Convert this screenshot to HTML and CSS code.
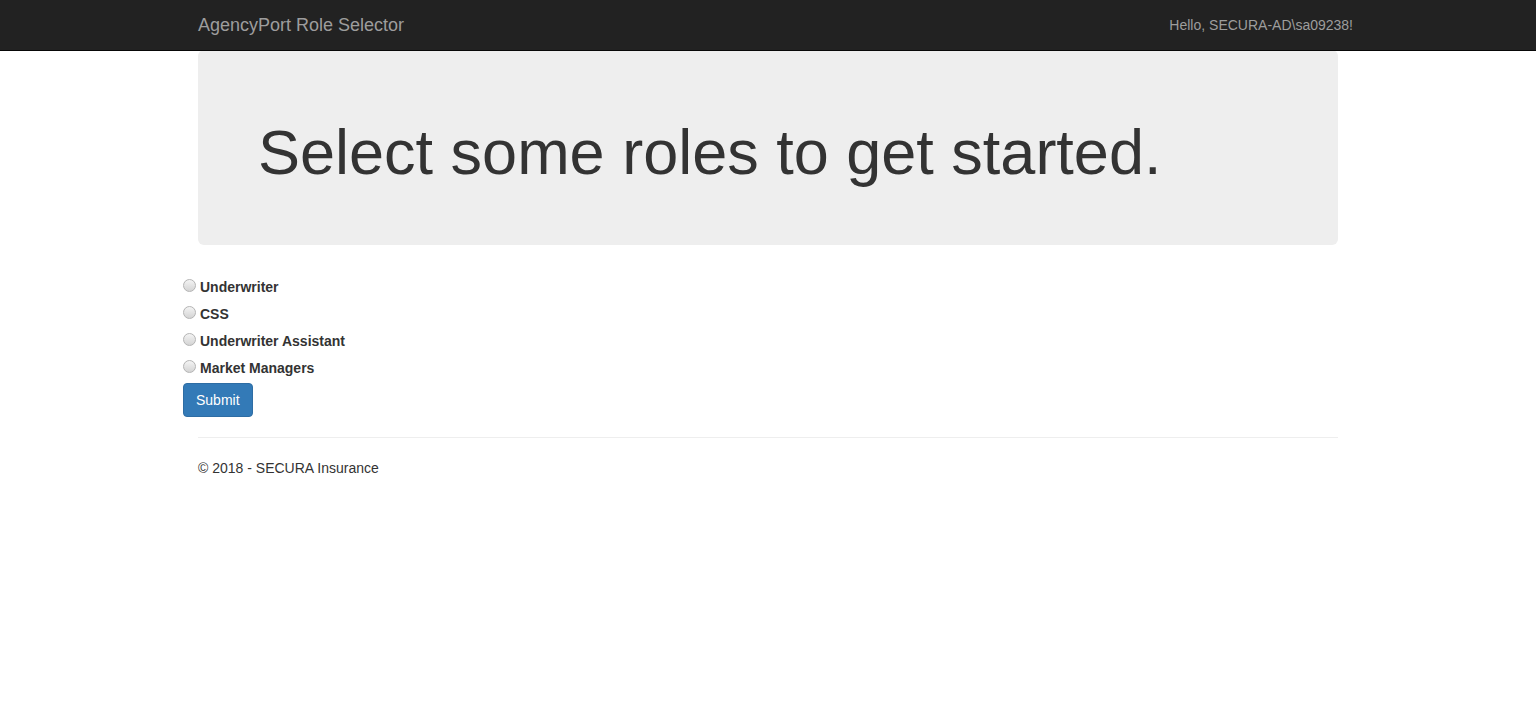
FILE: index.html
```html
<!DOCTYPE html>
<html lang="en">
<head>
<meta charset="utf-8">
<title>AgencyPort Role Selector</title>
<link rel="stylesheet" href="styles.css">
</head>
<body>
<header class="navbar">
  <div class="container nav-inner">
    <a class="brand" href="#">AgencyPort Role Selector</a>
    <span class="nav-text">Hello, SECURA-AD\sa09238!</span>
  </div>
</header>
<main class="container body-content">
  <div class="jumbotron">
    <h1>Select some roles to get started.</h1>
  </div>
  <form class="roles">
    <div class="role"><input type="radio" name="role" id="r1"><label for="r1">Underwriter</label></div>
    <div class="role"><input type="radio" name="role" id="r2"><label for="r2">CSS</label></div>
    <div class="role"><input type="radio" name="role" id="r3"><label for="r3">Underwriter Assistant</label></div>
    <div class="role"><input type="radio" name="role" id="r4"><label for="r4">Market Managers</label></div>
    <button type="button" class="btn">Submit</button>
  </form>
  <div class="inner">
    <hr>
    <footer>
      <p>© 2018 - SECURA Insurance</p>
    </footer>
  </div>
</main>
</body>
</html>
```

FILE: styles.css
```css
* { box-sizing: border-box; }
html, body { margin: 0; padding: 0; }
body {
  font-family: "Liberation Sans", Arial, sans-serif;
  font-size: 14px;
  line-height: 20px;
  color: #333;
  background: #fff;
}
.container {
  width: 1170px;
  margin: 0 auto;
}
.navbar {
  position: relative;
  z-index: 2;
  height: 50px;
  background: #222;
  box-shadow: 0 1px 0 #080808;
}
.nav-inner {
  height: 50px;
  padding: 0 0 0 15px;
  display: flex;
  align-items: center;
  justify-content: space-between;
}
.brand {
  color: #9d9d9d;
  font-size: 18px;
  line-height: 20px;
  text-decoration: none;
}
.nav-text {
  color: #9d9d9d;
  font-size: 14px;
  line-height: 20px;
}
.jumbotron {
  margin: 0 15px 30px;
  padding: 48px 60px;
  background: #eee;
  border-radius: 6px;
}
.jumbotron h1 {
  margin: 20px 0 10px;
  font-size: 63px;
  line-height: 1.1;
  font-weight: 500;
  color: #333;
}
.roles {
  display: flex;
  flex-direction: column;
  align-items: flex-start;
  padding-top: 2px;
}
.role {
  display: flex;
  align-items: center;
  height: 20px;
  margin-bottom: 7px;
}
.role input {
  appearance: none;
  -webkit-appearance: none;
  width: 13px;
  height: 13px;
  margin: 0 4px 0 0;
  position: relative;
  top: -2px;
  border: 1px solid #b4b4b4;
  border-radius: 50%;
  background: linear-gradient(180deg, #f4f4f4 0%, #e2e2e2 55%, #d4d4d4 100%);
}
.role input:checked {
  background: radial-gradient(circle, #333 0 2.5px, #e2e2e2 3px);
}
.role label {
  font-weight: bold;
  font-size: 14px;
  line-height: 20px;
}
.btn {
  margin-top: -2px;
  height: 34px;
  padding: 6px 12px;
  font-family: "Liberation Sans", Arial, sans-serif;
  font-size: 14px;
  line-height: 20px;
  color: #fff;
  background: #337ab7;
  border: 1px solid #2e6da4;
  border-radius: 4px;
}
.inner {
  padding: 0 15px;
}
hr {
  margin: 20px 0;
  border: 0;
  border-top: 1px solid #eee;
}
footer p {
  margin: 0 0 10px;
}
```
